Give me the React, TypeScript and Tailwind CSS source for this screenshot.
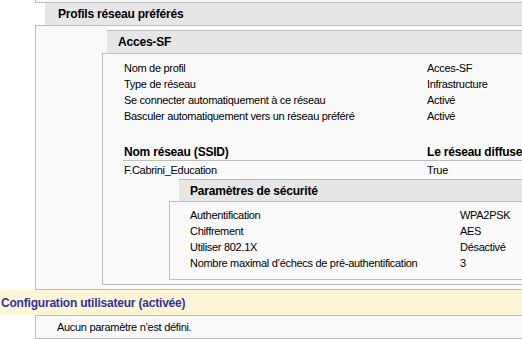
import React from "react";

const rowsA: [string, string][] = [
  ["Nom de profil", "Acces-SF"],
  ["Type de réseau", "Infrastructure"],
  ["Se connecter automatiquement à ce réseau", "Activé"],
  ["Basculer automatiquement vers un réseau préféré", "Activé"],
];

const rowsS: [string, string][] = [
  ["Authentification", "WPA2PSK"],
  ["Chiffrement", "AES"],
  ["Utiliser 802.1X", "Désactivé"],
  ["Nombre maximal d’échecs de pré-authentification", "3"],
];

export default function App() {
  return (
    <div className="w-[522px] h-[340px] overflow-hidden bg-white text-black font-['Liberation_Sans',Arial,sans-serif]">
      <div className="w-[700px]">
        <div className="ml-[35px] h-[3px] border-l border-b border-[#bdbdbd] bg-[#f9f9f9]" />
        <div className="ml-[45px] h-[22px] bg-[#e6e6e6] flex items-center pl-[13px] font-bold text-[12px] tracking-[-0.2px] whitespace-nowrap">
          Profils réseau préférés
        </div>
        <div className="ml-[35px] border-l border-t border-b border-[#bdbdbd] bg-[#f9f9f9] pt-[4px] pb-[4px]">
          <div className="ml-[71px] h-[23px] border-t border-[#bdbdbd] bg-[#e6e6e6] flex items-center pl-[11px] font-bold text-[12px] tracking-[-0.2px]">
            Acces-SF
          </div>
          <div className="ml-[66px] border-l border-t border-b border-[#bdbdbd] bg-[#f9f9f9] pt-[6px] pb-[4px]">
            <div className="pl-[21px] text-[11px] tracking-[-0.3px]">
              {rowsA.map(([k, v]) => (
                <div key={k} className="flex h-[16px] items-center whitespace-nowrap">
                  <div className="w-[303px]">{k}</div>
                  <div>{v}</div>
                </div>
              ))}
            </div>
            <div className="mt-[20px] ml-[20px]">
              <div className="flex h-[17px] items-center border-b border-[#bdbdbd] font-bold text-[12px] tracking-[-0.2px] whitespace-nowrap">
                <div className="w-[304px] pl-[1px]">Nom réseau (SSID)</div>
                <div>Le réseau diffuse son SSID</div>
              </div>
              <div className="flex h-[18px] items-center text-[11px] tracking-[-0.3px] whitespace-nowrap">
                <div className="w-[304px] pl-[1px]">F.Cabrini_Education</div>
                <div>True</div>
              </div>
            </div>
            <div className="ml-[76px] h-[22px] border-t border-[#bdbdbd] bg-[#e6e6e6] flex items-center pl-[11px] font-bold text-[12px] tracking-[-0.2px] whitespace-nowrap">
              Paramètres de sécurité
            </div>
            <div className="ml-[66px] border-l border-t border-b border-[#bdbdbd] bg-[#f9f9f9] pt-[5px] pb-[8px]">
              <div className="pl-[20px] text-[11px] tracking-[-0.3px]">
                {rowsS.map(([k, v]) => (
                  <div key={k} className="flex h-[16px] items-center whitespace-nowrap">
                    <div className="w-[270px]">{k}</div>
                    <div>{v}</div>
                  </div>
                ))}
              </div>
            </div>
          </div>
        </div>
        <div className="h-[25px] bg-[#fdf5d6] flex items-center pl-[1px] font-bold text-[12px] tracking-[-0.2px] text-[#333399] whitespace-nowrap">
          Configuration utilisateur (activée)
        </div>
        <div className="ml-[35px] h-[24px] border-l border-t border-b border-[#bdbdbd] bg-[#f9f9f9] flex items-center pl-[21px] text-[11px] tracking-[-0.3px] whitespace-nowrap">
          Aucun paramètre n’est défini.
        </div>
      </div>
    </div>
  );
}
